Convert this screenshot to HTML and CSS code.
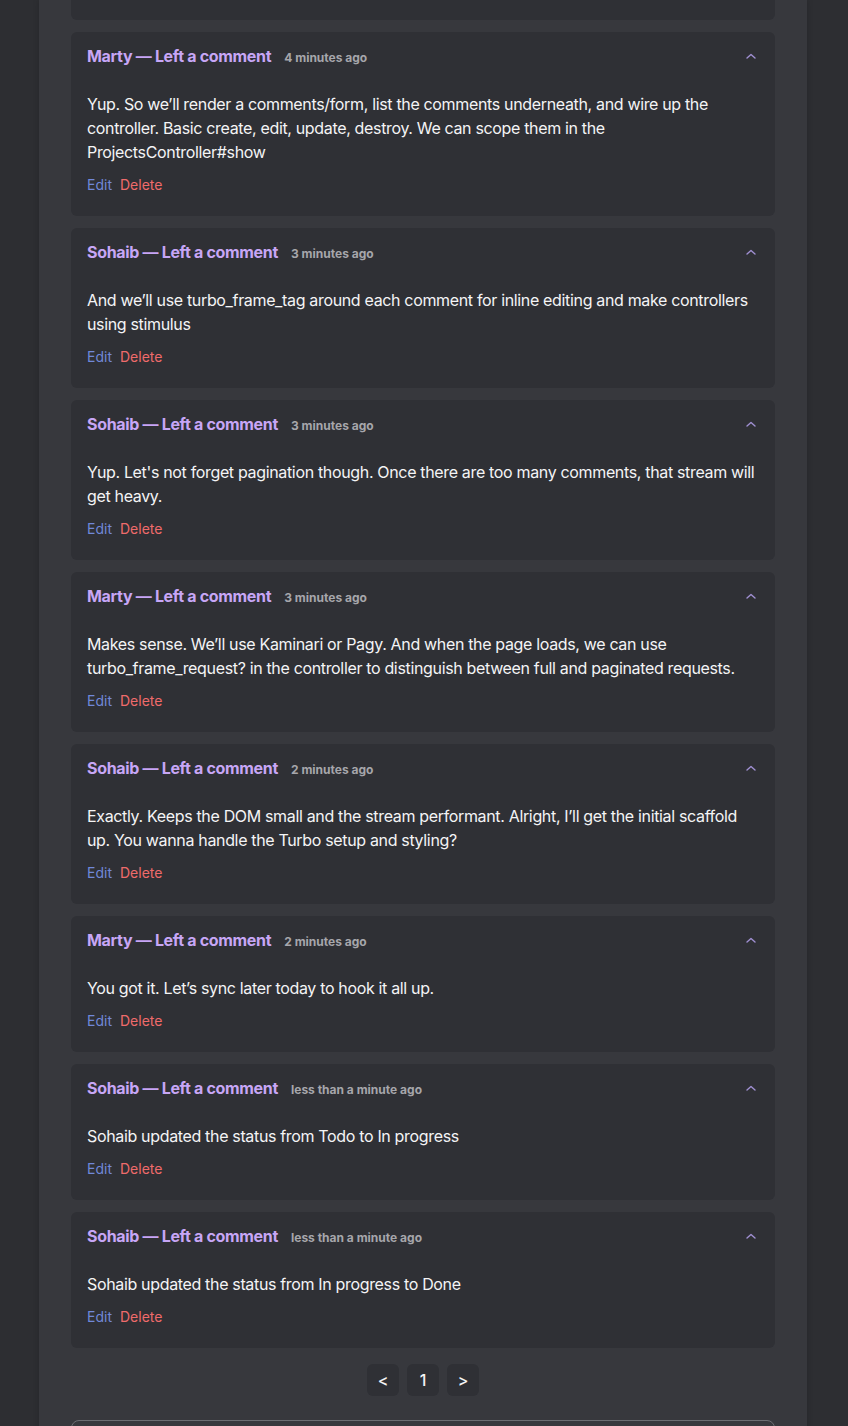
FILE: index.html
```html
<!DOCTYPE html>
<html lang="en">
<head>
<meta charset="utf-8">
<title>Comments</title>
<link rel="stylesheet" href="styles.css">
</head>
<body>
<main class="column">
  <div class="card card-cut"></div>

  <article class="card">
    <header class="card-head">
      <h3 class="author">Marty — Left a comment</h3>
      <span class="time">4 minutes ago</span>
      <button class="toggle" aria-label="Collapse"><svg width="10" height="6" viewBox="0 0 10 6"><polyline points="1,5 5,1.5 9,5" fill="none" stroke="currentColor" stroke-width="1.4" stroke-linecap="round" stroke-linejoin="round"/></svg></button>
    </header>
    <p class="body">Yup. So we’ll render a comments/form, list the comments underneath, and wire up the controller. Basic create, edit, update, destroy. We can scope them in the ProjectsController#show</p>
    <div class="actions"><a class="edit">Edit</a><a class="delete">Delete</a></div>
  </article>

  <article class="card">
    <header class="card-head">
      <h3 class="author">Sohaib — Left a comment</h3>
      <span class="time">3 minutes ago</span>
      <button class="toggle" aria-label="Collapse"><svg width="10" height="6" viewBox="0 0 10 6"><polyline points="1,5 5,1.5 9,5" fill="none" stroke="currentColor" stroke-width="1.4" stroke-linecap="round" stroke-linejoin="round"/></svg></button>
    </header>
    <p class="body">And we’ll use turbo_frame_tag around each comment for inline editing and make controllers using stimulus</p>
    <div class="actions"><a class="edit">Edit</a><a class="delete">Delete</a></div>
  </article>

  <article class="card">
    <header class="card-head">
      <h3 class="author">Sohaib — Left a comment</h3>
      <span class="time">3 minutes ago</span>
      <button class="toggle" aria-label="Collapse"><svg width="10" height="6" viewBox="0 0 10 6"><polyline points="1,5 5,1.5 9,5" fill="none" stroke="currentColor" stroke-width="1.4" stroke-linecap="round" stroke-linejoin="round"/></svg></button>
    </header>
    <p class="body">Yup. Let's not forget pagination though. Once there are too many comments, that stream will get heavy.</p>
    <div class="actions"><a class="edit">Edit</a><a class="delete">Delete</a></div>
  </article>

  <article class="card">
    <header class="card-head">
      <h3 class="author">Marty — Left a comment</h3>
      <span class="time">3 minutes ago</span>
      <button class="toggle" aria-label="Collapse"><svg width="10" height="6" viewBox="0 0 10 6"><polyline points="1,5 5,1.5 9,5" fill="none" stroke="currentColor" stroke-width="1.4" stroke-linecap="round" stroke-linejoin="round"/></svg></button>
    </header>
    <p class="body">Makes sense. We’ll use Kaminari or Pagy. And when the page loads, we can use turbo_frame_request? in the controller to distinguish between full and paginated requests.</p>
    <div class="actions"><a class="edit">Edit</a><a class="delete">Delete</a></div>
  </article>

  <article class="card">
    <header class="card-head">
      <h3 class="author">Sohaib — Left a comment</h3>
      <span class="time">2 minutes ago</span>
      <button class="toggle" aria-label="Collapse"><svg width="10" height="6" viewBox="0 0 10 6"><polyline points="1,5 5,1.5 9,5" fill="none" stroke="currentColor" stroke-width="1.4" stroke-linecap="round" stroke-linejoin="round"/></svg></button>
    </header>
    <p class="body">Exactly. Keeps the DOM small and the stream performant. Alright, I’ll get the initial scaffold up. You wanna handle the Turbo setup and styling?</p>
    <div class="actions"><a class="edit">Edit</a><a class="delete">Delete</a></div>
  </article>

  <article class="card">
    <header class="card-head">
      <h3 class="author">Marty — Left a comment</h3>
      <span class="time">2 minutes ago</span>
      <button class="toggle" aria-label="Collapse"><svg width="10" height="6" viewBox="0 0 10 6"><polyline points="1,5 5,1.5 9,5" fill="none" stroke="currentColor" stroke-width="1.4" stroke-linecap="round" stroke-linejoin="round"/></svg></button>
    </header>
    <p class="body">You got it. Let’s sync later today to hook it all up.</p>
    <div class="actions"><a class="edit">Edit</a><a class="delete">Delete</a></div>
  </article>

  <article class="card">
    <header class="card-head">
      <h3 class="author">Sohaib — Left a comment</h3>
      <span class="time">less than a minute ago</span>
      <button class="toggle" aria-label="Collapse"><svg width="10" height="6" viewBox="0 0 10 6"><polyline points="1,5 5,1.5 9,5" fill="none" stroke="currentColor" stroke-width="1.4" stroke-linecap="round" stroke-linejoin="round"/></svg></button>
    </header>
    <p class="body">Sohaib updated the status from Todo to In progress</p>
    <div class="actions"><a class="edit">Edit</a><a class="delete">Delete</a></div>
  </article>

  <article class="card">
    <header class="card-head">
      <h3 class="author">Sohaib — Left a comment</h3>
      <span class="time">less than a minute ago</span>
      <button class="toggle" aria-label="Collapse"><svg width="10" height="6" viewBox="0 0 10 6"><polyline points="1,5 5,1.5 9,5" fill="none" stroke="currentColor" stroke-width="1.4" stroke-linecap="round" stroke-linejoin="round"/></svg></button>
    </header>
    <p class="body">Sohaib updated the status from In progress to Done</p>
    <div class="actions"><a class="edit">Edit</a><a class="delete">Delete</a></div>
  </article>

  <nav class="pagination">
    <a class="page-btn">&lt;</a>
    <a class="page-btn">1</a>
    <a class="page-btn">&gt;</a>
  </nav>

  <div class="form-box"></div>
</main>
</body>
</html>
```
FILE: styles.css
```css
html, body {
  margin: 0;
  padding: 0;
}
body {
  background: #2d2e32;
  font-family: Inter, "Noto Sans", "Liberation Sans", sans-serif;
  color: #f4f4f5;
  overflow: hidden;
}
.column {
  width: 768px;
  margin: 0 0 0 39px;
  padding: 0 32px;
  box-sizing: border-box;
  background: #37383d;
  min-height: 1426px;
  display: flex;
  flex-direction: column;
  gap: 12px;
  box-shadow: 0 0 6px rgba(0, 0, 0, 0.18);
}
.card {
  background: #2f3035;
  border-radius: 6px;
  padding: 16px 16px 21px;
}
.card-cut {
  height: 20px;
  padding: 0;
  border-radius: 0 0 6px 6px;
}
.card-head {
  display: flex;
  align-items: baseline;
  gap: 13px;
  height: 16px;
  line-height: 16px;
}
.author {
  margin: 0;
  font-size: 16px;
  font-weight: 700;
  color: #c7a6f6;
  letter-spacing: -0.32px;
}
.time {
  font-size: 12px;
  font-weight: 700;
  color: #a6a6ab;
}
.toggle {
  margin-left: auto;
  align-self: center;
  width: 20px;
  height: 16px;
  padding: 0 0 0 4px;
  border: 0;
  background: none;
  color: #a08fd2;
  display: flex;
  align-items: center;
  justify-content: center;
}
.body {
  margin: 28px 0 0;
  font-size: 16px;
  line-height: 24px;
  color: #f4f4f5;
  letter-spacing: -0.34px;
}
.actions {
  display: flex;
  gap: 8px;
  margin-top: 11px;
  font-size: 14px;
  line-height: 20px;
}
.edit {
  color: #7188d8;
}
.delete {
  color: #ef6b6b;
}
.pagination {
  display: flex;
  justify-content: center;
  gap: 8px;
  margin-top: 4px;
}
.page-btn {
  width: 32px;
  height: 32px;
  border-radius: 6px;
  background: #2f3035;
  color: #f4f4f5;
  font-size: 16px;
  font-weight: 500;
  display: flex;
  align-items: center;
  justify-content: center;
}
.form-box {
  margin-top: 12px;
  height: 140px;
  border: 1px solid #6c6d72;
  border-radius: 8px;
}
```
